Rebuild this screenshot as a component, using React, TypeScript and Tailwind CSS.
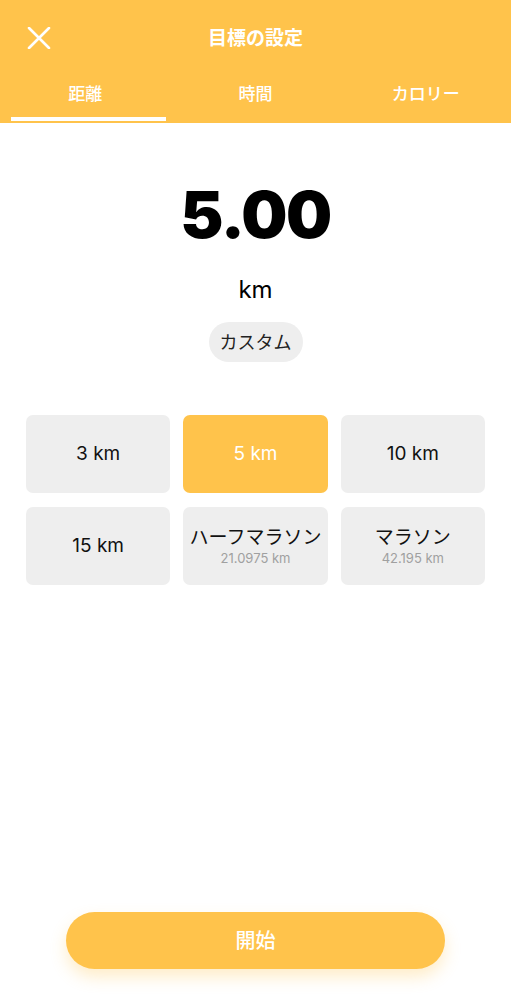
import { useState } from "react";

const presets = [
  { label: "3 km" },
  { label: "5 km" },
  { label: "10 km" },
  { label: "15 km" },
  { label: "ハーフマラソン", sub: "21.0975 km" },
  { label: "マラソン", sub: "42.195 km" },
];

const tabs = ["距離", "時間", "カロリー"];

export default function App() {
  const [tab, setTab] = useState(0);
  const [selected, setSelected] = useState(1);

  return (
    <div
      className="w-[511px] h-[1000px] bg-white flex flex-col"
      style={{ fontFamily: 'Inter, "Noto Sans CJK JP", sans-serif' }}
    >
      <header className="bg-[#ffc34b] h-[123px] flex flex-col">
        <div className="relative h-[76px] flex items-center justify-center">
          <button className="absolute left-[27px] top-[27px] w-[24px] h-[22px] flex items-center justify-center">
            <svg width="24" height="22" viewBox="0 0 24 22" fill="none" stroke="white" strokeWidth="2.6" strokeLinecap="round">
              <path d="M2 1L22 21M22 1L2 21" />
            </svg>
          </button>
          <h1 className="text-white text-[19px] font-bold leading-none">目標の設定</h1>
        </div>
        <div className="flex flex-1">
          {tabs.map((t, i) => (
            <button key={t} onClick={() => setTab(i)} className="flex-1 flex flex-col">
              <span className="flex-1 flex items-center justify-center pb-[4px] text-white text-[17px] font-medium">
                {t}
              </span>
              <span className={`h-[4px] ml-[11px] w-[155px] mb-[2px] ${tab === i ? "bg-white" : "bg-transparent"}`} />
            </button>
          ))}
        </div>
      </header>

      <main className="flex-1 flex flex-col items-center">
        <div className="mt-[59px] text-[65px] leading-none font-black text-black tracking-[-1.5px]">
          5.00
        </div>
        <div className="mt-[31px] text-[24px] leading-none font-normal text-black">km</div>
        <div className="mt-[20px] h-[40px] px-[11px] rounded-full bg-[#eeeeee] flex items-center text-[18px] text-[#222]">
          カスタム
        </div>

        <div className="mt-[53px] grid grid-cols-3 gap-x-[13px] gap-y-[14px] w-[459px]">
          {presets.map((p, i) => (
            <button
              key={p.label}
              onClick={() => setSelected(i)}
              className={`h-[78px] rounded-[7px] flex flex-col items-center justify-center ${
                selected === i ? "bg-[#ffc34b] text-white" : "bg-[#eeeeee] text-[#111]"
              }`}
            >
              <span className="text-[19px] leading-tight">{p.label}</span>
              {p.sub && <span className="text-[13px] leading-tight text-[#a0a0a0]">{p.sub}</span>}
            </button>
          ))}
        </div>

        <div className="flex-1" />
        <button className="mb-[31px] w-[379px] h-[57px] rounded-full bg-[#ffc34b] text-white text-[20px] font-medium shadow-[0_8px_16px_rgba(255,195,75,0.3)]">
          開始
        </button>
      </main>
    </div>
  );
}
